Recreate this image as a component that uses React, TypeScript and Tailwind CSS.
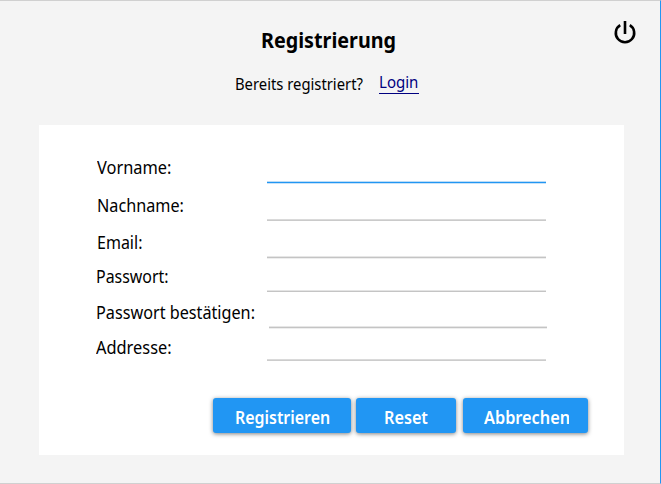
type Field = {
  label: string;
  type: string;
  row: string;
  text: string;
  input: string;
};

const fields: Field[] = [
  { label: "Vorname:", type: "text", row: "h-[38px]", text: "ml-px scale-x-[0.91]", input: "w-[279px] h-[29px] border-b-[#c8e2f8] bg-[linear-gradient(#bcdcf6_50%,#2196f3_50%)]" },
  { label: "Nachname:", type: "text", row: "h-[37px]", text: "ml-px scale-x-[0.9]", input: "w-[279px] h-[29px] border-b-transparent bg-[linear-gradient(#dadada_50%,#cacaca_50%)]" },
  { label: "Email:", type: "email", row: "h-[34px]", text: "ml-px scale-x-[0.89]", input: "w-[279px] h-[29px] border-b-[#eeeeee] bg-[linear-gradient(#e6e6e6_50%,#c4c4c4_50%)]" },
  { label: "Passwort:", type: "password", row: "h-[36px]", text: "scale-x-[0.885]", input: "w-[279px] h-[29px] border-b-transparent bg-[linear-gradient(#e4e4e4_50%,#c4c4c4_50%)]" },
  { label: "Passwort bestätigen:", type: "password", row: "h-[35px]", text: "scale-x-[0.9]", input: "w-[278px] h-[29px] ml-[2px] border-b-[#eeeeee] bg-[linear-gradient(#e6e6e6_50%,#c4c4c4_50%)]" },
  { label: "Addresse:", type: "text", row: "h-[35px]", text: "scale-x-[0.91]", input: "w-[279px] h-[27px] border-b-transparent bg-[linear-gradient(#dadada_50%,#cccccc_50%)]" },
];

const buttons = [
  { label: "Registrieren", box: "w-[138px] pl-[22px]", text: "scale-x-[0.885]" },
  { label: "Reset", box: "w-[100px] ml-[5px] pl-[28px]", text: "scale-x-[0.9]" },
  { label: "Abbrechen", box: "w-[125px] ml-[7px] pl-[21px]", text: "w-[94px] overflow-hidden scale-x-[0.905]" },
];

export default function App() {
  return (
    <main className="flex h-[484px] w-[661px] flex-col overflow-hidden border-t border-b border-r border-y-[#d0d0d0] border-r-[#2196f3] bg-[#f4f4f4] font-['Noto_Sans',sans-serif] text-black">
      <header className="flex h-[124px] items-start">
        <div className="w-[235px]" />
        <div className="w-[378px]">
          <h1 className="ml-[26px] mt-[25px] w-fit origin-left scale-x-[0.94] whitespace-nowrap text-[21px] font-bold leading-[28px]">
            Registrierung
          </h1>
          <div className="mt-[18px] flex items-start">
            <div className="w-[144px] pt-[2px]">
              <p className="w-fit origin-left scale-x-[0.955] whitespace-nowrap text-[15.5px] leading-[20px]">Bereits registriert?</p>
            </div>
            <a href="#login" className="h-[22px] w-[40px] border-b border-[#000080] text-[16px] leading-[20px] text-[#000080]">
              <span className="inline-block origin-left scale-x-[0.94]">Login</span>
            </a>
          </div>
        </div>
        <button type="button" aria-label="Beenden" className="mt-[18px]">
          <svg width="24" height="25" viewBox="0 0 24 25" fill="none" stroke="#000" strokeWidth="2.6">
            <path d="M12 2v13" />
            <path d="M7.2 6.2a9.2 9.2 0 1 0 9.6 0" />
          </svg>
        </button>
      </header>
      <form className="ml-[39px] flex h-[330px] w-[585px] flex-col bg-white pt-[30px]">
        {fields.map((f) => (
          <label key={f.label} className={`flex items-start pl-[57px] ${f.row}`}>
            <span className="w-[171px] shrink-0">
              <span className={`block w-fit origin-left whitespace-nowrap text-[18px] leading-[24px] ${f.text}`}>{f.label}</span>
            </span>
            <input
              type={f.type}
              className={`appearance-none border-b bg-[length:100%_2px] bg-bottom bg-no-repeat bg-origin-padding bg-clip-padding outline-none ${f.input}`}
            />
          </label>
        ))}
        <div className="mt-[28px] flex pl-[174px]">
          {buttons.map((b) => (
            <button
              key={b.label}
              type="button"
              className={`flex h-[35px] items-center overflow-hidden rounded-[3px] bg-[#2196f3] pt-[3px] text-[18px] font-semibold leading-[24px] text-white shadow-[0_1px_4px_rgba(0,0,0,0.5)] ${b.box}`}
            >
              <span className={`block shrink-0 origin-left whitespace-nowrap text-left ${b.text}`}>{b.label}</span>
            </button>
          ))}
        </div>
      </form>
    </main>
  );
}
